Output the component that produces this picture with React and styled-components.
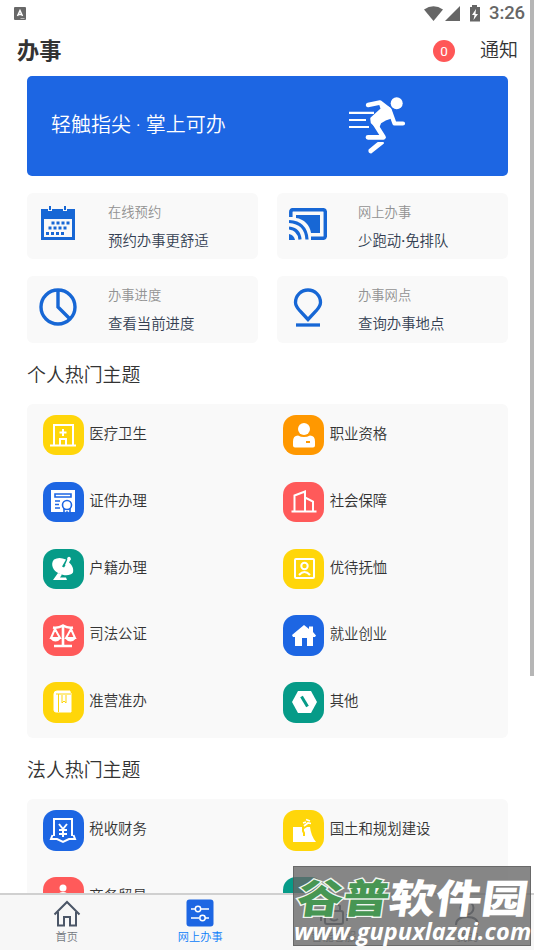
import React from 'react';
import styled, { createGlobalStyle } from 'styled-components';

const Global = createGlobalStyle`
  * { box-sizing: border-box; }
  body { margin: 0; background: #fff; overflow: hidden; }
`;

const Screen = styled.div`
  position: relative;
  width: 534px;
  height: 950px;
  overflow: hidden;
  display: flex;
  flex-direction: column;
  background: #fff;
  color: #333;
  font-family: Roboto, 'Noto Sans CJK SC', sans-serif;
  font-weight: 350;
`;

const StatusBar = styled.div`
  flex: none;
  height: 27px;
  padding: 0 9px 0 14px;
  display: flex;
  align-items: center;
  justify-content: space-between;
  color: #666;
`;

const StatusIcons = styled.div`
  display: flex;
  align-items: center;
  height: 27px;
`;

const Clock = styled.span`
  margin-left: 7px;
  font-size: 18.5px;
  line-height: 29px;
  font-weight: 500;
  letter-spacing: -0.1px;
`;

const Header = styled.header`
  flex: none;
  height: 49px;
  padding: 0 16px 1px 17px;
  display: flex;
  align-items: center;
`;

const PageTitle = styled.h1`
  margin: 0;
  flex: 1;
  font-size: 22.2px;
  line-height: 30px;
  font-weight: 700;
`;

const Badge = styled.span`
  width: 22px;
  height: 22px;
  margin: 0 25px 0 0;
  border-radius: 50%;
  background: #ff5757;
  color: #fff;
  font-size: 13.5px;
  line-height: 22px;
  font-weight: 400;
  text-align: center;
`;

const Notice = styled.span`
  font-size: 19px;
  line-height: 28px;
`;

const Content = styled.main`
  flex: 1;
  min-height: 0;
  overflow: hidden;
  padding: 0 26px 0 27px;
`;

const Banner = styled.section`
  height: 100px;
  border-radius: 5px;
  background: #1d66e3;
  color: #fff;
  padding: 0 101px 4px 24px;
  display: flex;
  align-items: center;
  justify-content: space-between;
  font-size: 20px;
  font-weight: 350;
`;

const Slogan = styled.span`
  padding-bottom: 2px;
`;

const CardGrid = styled.section`
  margin-top: 17px;
  display: grid;
  grid-template-columns: 231px 231px;
  grid-auto-rows: 66.4px;
  gap: 17px 19px;
`;

const Card = styled.div`
  display: flex;
  border-radius: 6px;
  background: #f9f9f9;
  padding: 9px 0 0 11px;
`;

const CardIcon = styled.div`
  width: 40px;
  height: 43px;
  display: flex;
  align-items: center;
  justify-content: center;
`;

const CardText = styled.div`
  margin-left: 30px;
`;

const CardLabel = styled.div`
  color: #929292;
  font-size: 13.3px;
  line-height: 21px;
`;

const CardName = styled.div`
  margin-top: 8px;
  color: #343f52;
  font-size: 14.4px;
  line-height: 22px;
`;

const MiddleDot = styled.span`
  font-family: 'Open Sans', sans-serif;
  font-weight: 600;
  line-height: 1;
`;

const SectionTitle = styled.h2`
  margin: 0;
  height: 61.2px;
  padding-top: 2px;
  font-size: 18.9px;
  line-height: 61px;
  font-weight: 350;
`;

const Panel = styled.section`
  display: grid;
  grid-template-columns: 240.4px 1fr;
  grid-auto-rows: 66.8px;
  border-radius: 6px;
  background: #f9f9f9;
`;

const Topic = styled.div`
  display: flex;
  padding: 11px 0 0 16px;
`;

const Tile = styled.div`
  width: 40.5px;
  height: 40.5px;
  border-radius: 13px;
  background: ${(p) => p.$color};
  display: flex;
  align-items: center;
  justify-content: center;
`;

const TopicName = styled.span`
  margin-left: 5.8px;
  font-size: 14.4px;
  line-height: 40px;
`;

const TabBar = styled.nav`
  flex: none;
  height: 57px;
  border-top: 2px solid #d0d0d0;
  background: #f7f7f7;
  display: grid;
  grid-template-columns: repeat(4, 1fr);
`;

const Tab = styled.div`
  display: flex;
  flex-direction: column;
  align-items: center;
  padding-top: 4px;
  color: ${(p) => (p.$active ? '#0b7dfa' : '#737780')};
  font-size: 11.2px;
  line-height: 18px;
  svg { margin-bottom: 2px; }
`;

const ScrollThumb = styled.div`
  position: absolute;
  top: 0;
  right: 0;
  width: 4px;
  height: 676px;
  background: #b6b6b6;
`;

const Watermark = styled.div`
  position: absolute;
  left: 293px;
  top: 866px;
  width: 238px;
  height: 80px;
  border: 1px solid rgba(75, 75, 75, 0.5);
  background: rgba(103, 103, 103, 0.79);
  color: #fff;
  white-space: nowrap;
`;

const BrandName = styled.div`
  height: 52px;
  padding-left: 4px;
  font-family: 'Noto Sans CJK SC', sans-serif;
  font-size: 46.2px;
  line-height: 58px;
  font-weight: 900;
  transform: skewX(-8deg) scaleY(0.86);
`;

const BrandAccent = styled.span`
  color: #479653;
  -webkit-text-stroke: 3px #f0f5f0;
  paint-order: stroke fill;
`;

const BrandUrl = styled.div`
  margin-top: -1px;
  font-family: 'Open Sans', sans-serif;
  font-size: 23.5px;
  line-height: 26px;
  font-weight: 700;
  font-style: italic;
  letter-spacing: 0.1px;
`;

const Glyph = ({ size = 28, children }) => (
  <svg width={size} height={size} viewBox="0 0 28 28" fill="none" stroke="#fff" strokeWidth="2">
    {children}
  </svg>
);

const glyphs = {
  hospital: <><path d="M5 24V4h19v20M1 24.5h26M11 24v-6h6v6M14 8v7M10.5 11.5h7" /></>,
  person: <g fill="#fff" stroke="none"><circle cx="14" cy="8" r="6" /><path fillRule="evenodd" d="M8 14.500q6 3 12 0 5 0 5 6v4q0 2-2 2H5q-2 0-2-2v-4q0-6 5-6zM16 20v2h4v-2z" /></g>,
  certificate: <><path d="M2 2h24v22H2z" fill="#fff" stroke="none" /><g stroke="#1d66e3" strokeWidth="1.600"><path d="M6 6h16v3H6zM6 13h5M6 16.500h4M6 20h5" /><path d="M15 20v6l3-2 3 2v-6" fill="#fff" /><circle cx="18" cy="17" r="4.500" fill="#fff" /></g></>,
  buildings: <path d="M1.500 23.500h25M4.500 23V7.500l10.500-4V23M15 9.500l8 4V23" />,
  dish: <g fill="#fff" stroke="none"><path d="M5 4.500C1 9 4 16 10 18.500c6 3 12 2 14-1 1-4-1-8-5-11l-4 6-2-1 4-7q-7-3-12 0z" /><path d="M9 18l-5 7h14l-1-2.500h-6l2-3M16 10l3-7 3 1-4 7z" /><circle cx="20" cy="3.500" r="1.700" /></g>,
  portrait: <><rect x="5" y="4" width="19" height="19" rx="1" /><circle cx="14.500" cy="11" r="3.200" /><path d="M9 20q5.500-6 11 0" /></>,
  scales: <><path d="M4 5.500q5 1 10-2 5 3 10 2M14 3v20M5 24h18" strokeWidth="2.600" /><path d="M6 7L2 16h9zM22 7l-5 9h9z" /><path d="M.5 16h12q-6 7-12 0M15.500 16h12q-6 7-12 0" fill="#fff" stroke="none" /></>,
  home: <path d="M14 3l5 4V4.500h4V10l3 3.500-1 1.500h-2v9h-6v-8h-5v8H5v-9H3l-1-2z" fill="#fff" stroke="none" />,
  book: <><path d="M7 5h15v19H7q-2 0-2-2V6q0-3 3-3h13v3" fill="#fff" stroke="#fff" strokeWidth="1" /><path d="M7 6h15M9.500 6v18M13 7v8l2-2 2 2V7" stroke="#ffd60a" strokeWidth="1" /></>,
  hexagon: <><path d="M8 3h13l6 11-6 11H8L2 14z" fill="#fff" stroke="none" /><path d="M11.500 8.500l6 10" stroke="#069b88" strokeWidth="3" /></>,
  tax: <><path d="M5 20V3h18v17M3.500 19l-1.500 4h6l6 3 6-3h6l-1.500-4" /><path d="M10 8l4 5 4-5M14 13v8M10 14h8M10 18h8" strokeWidth="2" /></>,
  land: <><path d="M3 11h9l2 2 3-2h3q1 9 6 15H3z" fill="#fff" stroke="none" /><path d="M13 11v4l1 2v3" stroke="#ffd60a" /><path d="M13 7l3-1M16 3.500l4 1.500M14 10l4-3 3 .5" strokeWidth="1.700" /></>,
  trader: <g fill="#fff" stroke="none"><circle cx="14" cy="5" r="3.500" /><path d="M8 18q-1-9 6-9t6 9z" /></g>,
};

const Runner = () => (
  <svg width="58" height="60" viewBox="0 0 58 60" fill="none" stroke="#fff" strokeLinecap="round" strokeLinejoin="round">
    <circle cx="47.700" cy="9.300" r="6" fill="#fff" stroke="none" />
    <path d="M19 11l12-2.500 9 7" strokeWidth="4.400" />
    <path d="M31 9l10 6 2 8-6 2-6 3.500-2 5-6-5-.500-4L33 15z" fill="#fff" strokeWidth="2.500" />
    <path d="M41 17l4.500 12.500H54" strokeWidth="4.200" />
    <path d="M25.500 29L34.500 43.300H19" strokeWidth="4.800" />
    <path d="M29 49h5l-12 9.500q-2-.5-1.500-2.500z" fill="#fff" strokeWidth="2" />
    <path d="M0 18.800h25M0 26h17M0 33h20" strokeWidth="2.200" strokeLinecap="butt" />
  </svg>
);

const CalendarIcon = () => (
  <svg width="34" height="35" viewBox="0 0 34 35">
    <path d="M0 3h34v31H0z" fill="#1767d5" />
    <path d="M3 13h28v18H3z" fill="#f9f9f9" />
    <path d="M9 0v5M24 0v5" stroke="#f9f9f9" strokeWidth="4" />
    <path d="M9 0v4M24 0v4" stroke="#1767d5" strokeWidth="2" />
    <path d="M10.500 17h18M7.500 22h18M5 27.500h18" stroke="#1767d5" strokeWidth="3" strokeDasharray="3 2" />
  </svg>
);

const CastIcon = () => (
  <svg width="38" height="32" viewBox="0 0 38 32" fill="none" stroke="#1767d5">
    <path d="M1.800 9V4q0-2.300 2.300-2.300h30q2.200 0 2.200 2.300v24q0 2.300-2.200 2.300H22" strokeWidth="3.500" />
    <path d="M7 7h24v18h-9C21 17 15 11 7 10z" fill="#1767d5" stroke="none" />
    <path d="M0 13.500q17 1 18 18M0 20q10 1 11 11.500" strokeWidth="3.200" />
    <path d="M0 26q5 1 6 6H0z" fill="#1767d5" stroke="none" />
  </svg>
);

const ClockIcon = () => (
  <svg width="38" height="38" viewBox="0 0 38 38" fill="none" stroke="#1767d5" strokeWidth="3.400">
    <circle cx="19" cy="19" r="17" />
    <path d="M19 2v17l12 12" />
  </svg>
);

const PinIcon = () => (
  <svg width="30" height="40" viewBox="0 -2 30 40" fill="none" stroke="#1767d5" strokeWidth="3.300">
    <path d="M15 30.500L7 22Q2.500 17 2.500 13.500a12.500 12.500 0 0 1 25 0Q27.500 17 23 22z" />
    <path d="M3 36h24" />
  </svg>
);

const services = [
  ['在线预约', '预约办事更舒适', CalendarIcon],
  ['网上办事', <>少跑动<MiddleDot>·</MiddleDot>免排队</>, CastIcon],
  ['办事进度', '查看当前进度', ClockIcon],
  ['办事网点', '查询办事地点', PinIcon],
];

const yellow = '#ffd60a';
const blue = '#1d66e3';
const red = '#ff5a5a';
const green = '#069b88';

const personalTopics = [
  ['医疗卫生', yellow, 'hospital'],
  ['职业资格', '#ff9800', 'person'],
  ['证件办理', blue, 'certificate'],
  ['社会保障', red, 'buildings'],
  ['户籍办理', green, 'dish'],
  ['优待抚恤', yellow, 'portrait'],
  ['司法公证', red, 'scales'],
  ['就业创业', blue, 'home'],
  ['准营准办', yellow, 'book'],
  ['其他', green, 'hexagon'],
];

const businessTopics = [
  ['税收财务', blue, 'tax'],
  ['国土和规划建设', yellow, 'land'],
  ['商务贸易', red, 'trader'],
  ['', green, null],
];

const TopicPanel = ({ items }) => (
  <Panel>
    {items.map(([name, color, glyph]) => (
      <Topic key={color + name}>
        <Tile $color={color}><Glyph>{glyphs[glyph]}</Glyph></Tile>
        <TopicName>{name}</TopicName>
      </Topic>
    ))}
  </Panel>
);

export default function App() {
  return (
    <Screen>
      <Global />
      <StatusBar>
        <svg width="12" height="13" viewBox="0 0 12 13">
          <rect width="12" height="13" rx="1" fill="#686868" />
          <path d="M3.500 9L6 3.500 8.500 9M4.500 7.500h3" fill="none" stroke="#fff" strokeWidth="1.500" />
          <path d="M6.500 11.500h4" stroke="#ccc" strokeWidth=".8" />
        </svg>
        <StatusIcons>
          <svg width="58" height="18" viewBox="0 0 58 18" fill="#666">
            <path d="M0 4.500Q9.500-2 19 4.500L9.500 16z" />
            <path d="M36 1v15H21z" />
            <path fillRule="evenodd" d="M46 2h2V0h5v2h3v14.500H46zM52 4l-4 6h2.500l-1 5 4.500-6h-2.500z" />
          </svg>
          <Clock>3:26</Clock>
        </StatusIcons>
      </StatusBar>
      <Header>
        <PageTitle>办事</PageTitle>
        <Badge>0</Badge>
        <Notice>通知</Notice>
      </Header>
      <Content>
        <Banner><Slogan>轻触指尖 · 掌上可办</Slogan><Runner /></Banner>
        <CardGrid>
          {services.map(([label, name, Icon]) => (
            <Card key={label}>
              <CardIcon><Icon /></CardIcon>
              <CardText>
                <CardLabel>{label}</CardLabel>
                <CardName>{name}</CardName>
              </CardText>
            </Card>
          ))}
        </CardGrid>
        <SectionTitle>个人热门主题</SectionTitle>
        <TopicPanel items={personalTopics} />
        <SectionTitle>法人热门主题</SectionTitle>
        <TopicPanel items={businessTopics} />
      </Content>
      <TabBar>
        <Tab>
          <svg width="28" height="28" viewBox="0 0 28 28" fill="none" stroke="#4b5667" strokeWidth="2">
            <path d="M1.500 15.500L14 3l12.500 12.500M5 13v13.500h6V18h6v8.500h6V13" />
          </svg>
          首页
        </Tab>
        <Tab $active>
          <svg width="28" height="28" viewBox="0 0 28 28" fill="none" stroke="#fff" strokeWidth="1.500">
            <rect x=".5" y=".5" width="27" height="27" rx="3" fill="#1d66e3" stroke="none" />
            <path d="M5 10h4m6 0h8M5 19h8m6 0h4" />
            <circle cx="12" cy="10" r="2.700" /><circle cx="16.500" cy="19" r="2.700" />
          </svg>
          网上办事
        </Tab>
        <Tab>
          <svg width="28" height="28" viewBox="0 0 28 28" fill="none" stroke="#4b5667" strokeWidth="2">
            <rect x="5" y="12" width="18" height="13" rx="2" /><path d="M1 15v7M27 15v7M8 12V7q6-5 12 0v5M10 20q4 3 8 0" />
          </svg>
          智能客服
        </Tab>
        <Tab>
          <svg width="28" height="28" viewBox="0 0 28 28" fill="none" stroke="#4b5667" strokeWidth="2">
            <circle cx="14" cy="9" r="6.500" /><path d="M3 26q0-8 11-8t11 8" />
          </svg>
          我的
        </Tab>
      </TabBar>
      <ScrollThumb />
      <Watermark>
        <BrandName><BrandAccent>谷普</BrandAccent>软件园</BrandName>
        <BrandUrl>www.gupuxlazai.com</BrandUrl>
      </Watermark>
    </Screen>
  );
}
